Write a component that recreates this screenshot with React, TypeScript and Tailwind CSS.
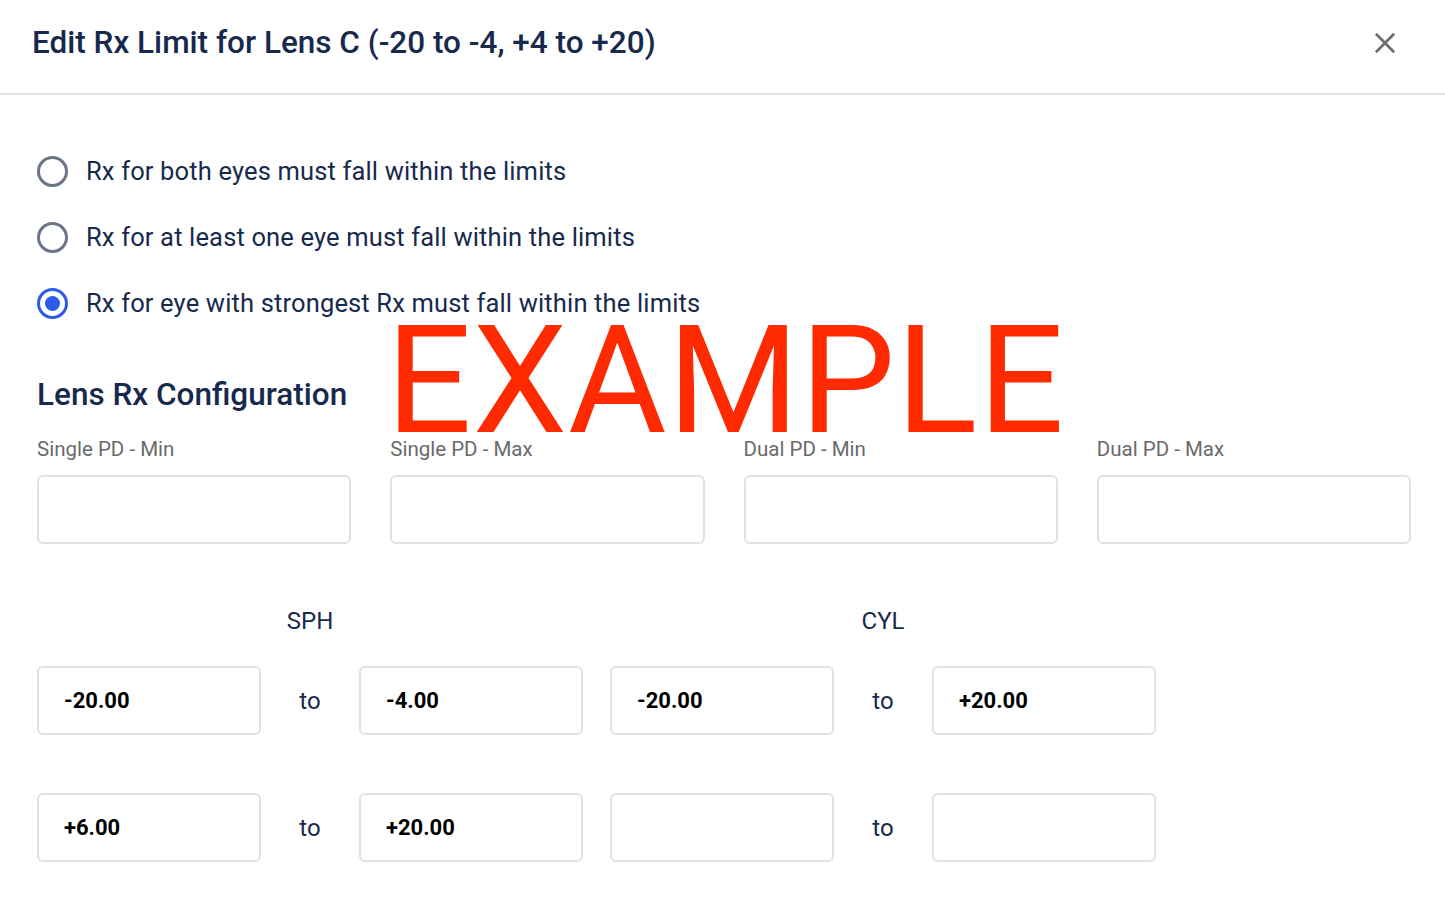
import React, { useState } from "react";

const NAVY = "text-[#172a4d]";

const radioOptions = [
  "Rx for both eyes must fall within the limits",
  "Rx for at least one eye must fall within the limits",
  "Rx for eye with strongest Rx must fall within the limits",
];

const pdFields = ["Single PD - Min", "Single PD - Max", "Dual PD - Min", "Dual PD - Max"];

const rxRows = [
  { sph: ["-20.00", "-4.00"], cyl: ["-20.00", "+20.00"] },
  { sph: ["+6.00", "+20.00"], cyl: ["", ""] },
];

const Box: React.FC<{ value?: string; className?: string }> = ({ value, className }) => (
  <div
    className={`h-[69px] rounded-md border-2 border-[#e1e1e1] bg-white flex items-center pl-[25px] text-[22px] font-bold text-black ${className ?? ""}`}
  >
    {value}
  </div>
);

const To = () => (
  <div className={`w-[98px] flex items-center justify-center text-[24px] ${NAVY}`}>to</div>
);

export default function App() {
  const [choice, setChoice] = useState(2);

  return (
    <div
      className="relative w-[1445px] h-[904px] bg-white overflow-hidden"
      style={{ fontFamily: "Roboto, 'Noto Sans', sans-serif" }}
    >
      {/* header */}
      <div className="h-[95px] flex items-center justify-between pl-[32px] pr-[46px] border-b-2 border-[#e3e3e3]">
        <h1 className={`text-[31.5px] font-medium ${NAVY} -mt-[8px]`}>
          Edit Rx Limit for Lens C (-20 to -4, +4 to +20)
        </h1>
        <button className="text-[#6f6f6f] -mt-[8px]">
          <svg width="28" height="28" viewBox="0 0 24 24" fill="none" stroke="currentColor" strokeWidth="2.4" strokeLinecap="square">
            <path d="M5 5 19 19M19 5 5 19" />
          </svg>
        </button>
      </div>

      <div className="pl-[37px] pr-[34px]">
        {/* radios */}
        <div className="pt-[60px] flex flex-col gap-[34px]">
          {radioOptions.map((label, i) => (
            <label key={i} className="flex items-center h-[32px] cursor-pointer" onClick={() => setChoice(i)}>
              <span
                className={`w-[31px] h-[31px] rounded-full border-[3px] flex items-center justify-center ${
                  choice === i ? "border-[#2c5ae9]" : "border-[#6b7489]"
                }`}
              >
                {choice === i && <span className="w-[15px] h-[15px] rounded-full bg-[#2c5ae9]" />}
              </span>
              <span className={`ml-[18px] text-[25.5px] tracking-[0.15px] ${NAVY}`}>{label}</span>
            </label>
          ))}
        </div>

        {/* configuration */}
        <h2 className={`mt-[52px] text-[31.5px] font-medium ${NAVY}`}>Lens Rx Configuration</h2>
        <div className="mt-[19px] grid grid-cols-4 gap-x-[39px]">
          {pdFields.map((f) => (
            <div key={f}>
              <div className="text-[20.5px] text-[#6a6a6a] leading-[24px]">{f}</div>
              <Box className="mt-[14px]" />
            </div>
          ))}
        </div>

        {/* SPH / CYL */}
        <div className="mt-[59px] flex">
          <div className="w-[224px]" />
          <div className={`w-[98px] text-center text-[24px] ${NAVY}`}>SPH</div>
          <div className="w-[224px]" />
          <div className="w-[27px]" />
          <div className="w-[224px]" />
          <div className={`w-[98px] text-center text-[24px] ${NAVY}`}>CYL</div>
        </div>

        <div className="mt-[27px] flex flex-col gap-[58px]">
          {rxRows.map((r, i) => (
            <div key={i} className="flex">
              <Box value={r.sph[0]} className="w-[224px]" />
              <To />
              <Box value={r.sph[1]} className="w-[224px]" />
              <div className="w-[27px]" />
              <Box value={r.cyl[0]} className="w-[224px]" />
              <To />
              <Box value={r.cyl[1]} className="w-[224px]" />
            </div>
          ))}
        </div>
      </div>

      {/* watermark */}
      <div className="absolute left-[386px] top-[296px] text-[151px] leading-[170px] text-[#ff2a00] pointer-events-none tracking-[0.8px]">
        EXAMPLE
      </div>
    </div>
  );
}
